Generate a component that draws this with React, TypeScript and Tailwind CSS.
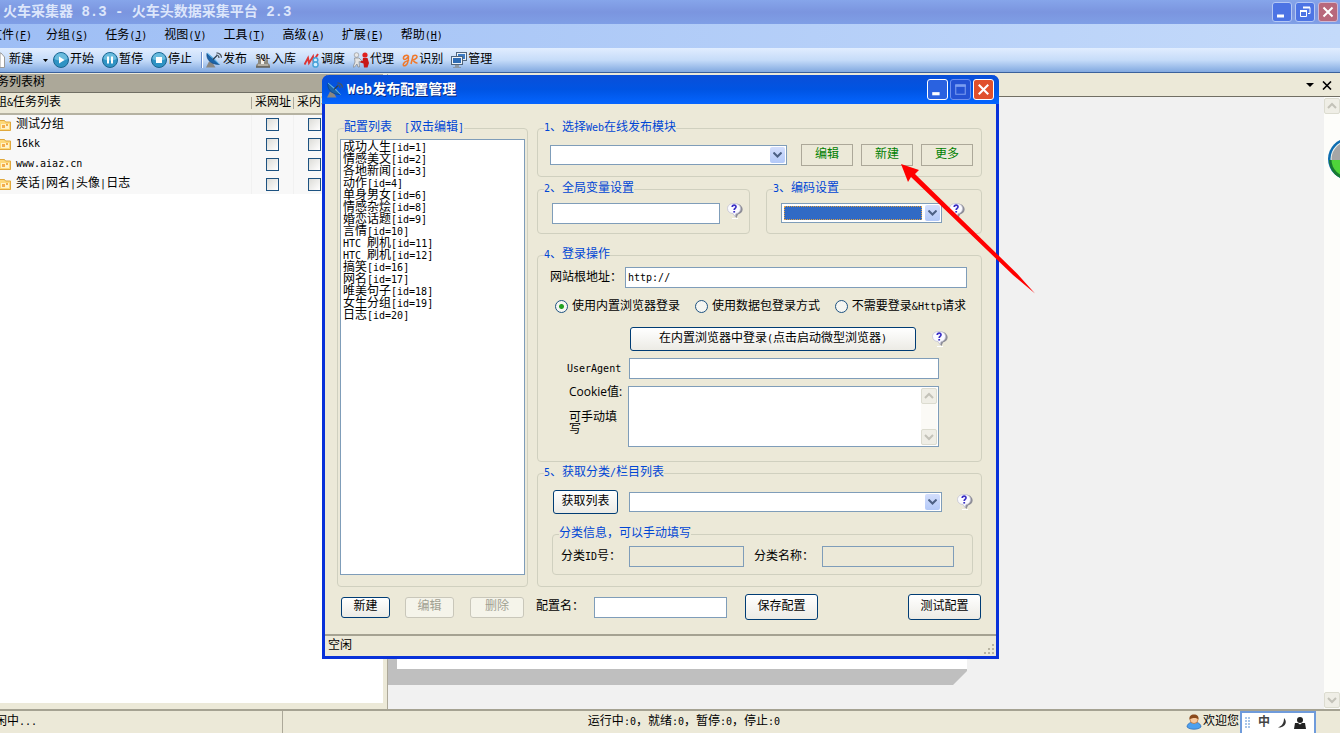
import { Fragment, type ReactNode } from "react";
import clsx from "clsx";

const MENU = [
  ["文件", "F"],
  ["分组", "S"],
  ["任务", "J"],
  ["视图", "V"],
  ["工具", "T"],
  ["高级", "A"],
  ["扩展", "E"],
  ["帮助", "H"],
];

const TREE = ["测试分组", "16kk", "www.aiaz.cn", "笑话|网名|头像|日志"];

const CONFIGS = [
  "成功人生[id=1]",
  "情感美文[id=2]",
  "各地新闻[id=3]",
  "动作[id=4]",
  "单身男女[id=6]",
  "情感杂烩[id=8]",
  "婚恋话题[id=9]",
  "言情[id=10]",
  "HTC 刷机[id=11]",
  "HTC 刷机[id=12]",
  "搞笑[id=16]",
  "网名[id=17]",
  "唯美句子[id=18]",
  "女生分组[id=19]",
  "日志[id=20]",
];

// Latin runs take half the width of a Chinese character
function Mixed({ children }: { children: string }) {
  return (
    <span className="whitespace-pre">
      {children.split(/([\x20-\x7e]+)/).map((part, i) =>
        i % 2 ? (
          <span key={i} className="font-['DejaVu_Sans_Mono',monospace] text-[10px]">
            {part}
          </span>
        ) : (
          <Fragment key={i}>{part}</Fragment>
        )
      )}
    </span>
  );
}

function DishIcon() {
  return (
    <svg className="h-4 w-4 shrink-0" viewBox="0 0 16 16">
      <path d="M0 15.500l3-6 4 2 2.500 4z" fill="#8a8782" />
      <path d="M1 1C0 6 3 12.500 13.500 12.500z" fill="#1b63a8" stroke="#0d3f78" strokeWidth=".6" />
      <path d="M1 1L13.500 12.500 8.500 7z" fill="#7cc4f0" stroke="#5db0e4" strokeWidth=".8" />
      <path d="M7 7.500l4-4" stroke="#2c3e50" strokeWidth="1.200" />
      <path d="M10 3a3 3 0 0 1 3 3M10.500.8a5 5 0 0 1 5 5" fill="none" stroke="#4b5560" strokeWidth="1.200" />
    </svg>
  );
}

function RoundIcon({ children }: { children: ReactNode }) {
  return (
    <svg className="h-4 w-4 shrink-0" viewBox="0 0 16 16">
      <circle cx="8" cy="8" r="7.500" fill="#2f93c4" stroke="#1c6590" />
      <path d="M1.500 7a6.500 6 0 0 1 13 0c-4 2-9 2-13 0z" fill="#69bbdd" />
      {children}
    </svg>
  );
}

function PlayIcon() {
  return (
    <RoundIcon>
      <path d="M6 4.500v7l5.500-3.500z" fill="#fff" />
    </RoundIcon>
  );
}

function PauseIcon() {
  return (
    <RoundIcon>
      <path d="M5 4.500h2v7H5zM9 4.500h2v7H9z" fill="#fff" />
    </RoundIcon>
  );
}

function StopIcon() {
  return (
    <RoundIcon>
      <path d="M5 5h6v6H5z" fill="#fff" />
    </RoundIcon>
  );
}

function SqlIcon() {
  return (
    <svg className="h-4 w-4 shrink-0" viewBox="0 0 16 16">
      <path d="M3 6h10v5l2 2v2.500H1V13l2-2z" fill="#8d8a80" />
      <path d="M6 7h3v5H6z" fill="#f2f0ea" />
      <path d="M3 12.500h10v1H3z" fill="#d8d5ca" />
      <path d="M1 14.500h14v1H1z" fill="#4c4a44" />
      <text x="8" y="7" textAnchor="middle" fontSize="8" fontWeight="bold" fill="#111" stroke="#e8f0fc" strokeWidth=".6" paintOrder="stroke">
        SQL
      </text>
    </svg>
  );
}

function ScheduleIcon() {
  return (
    <svg className="h-4 w-4 shrink-0" viewBox="0 0 16 16" fill="none">
      <path d="M.5 12.500L4 6l1 5 4-6.500.5 4.500L14 2" stroke="#dd3434" strokeWidth="1.900" />
      <circle cx="11.500" cy="8" r="2.300" fill="#d4efff" stroke="#4aa3da" strokeWidth="1.500" />
      <circle cx="11.500" cy="12.500" r="2.600" fill="#d4efff" stroke="#4aa3da" strokeWidth="1.500" />
    </svg>
  );
}

function ProxyIcon() {
  return (
    <svg className="h-4 w-4 shrink-0" viewBox="0 0 16 16">
      <circle cx="3.500" cy="3" r="2.300" fill="#e8e8e8" stroke="#8b8b8b" strokeWidth=".6" />
      <path d="M1.500 6h4.500l3 3-1 1.500-2-1 .5 5.500H5l-1-3-2.500 3H0l2-5z" fill="#e4e4e4" stroke="#777" strokeWidth=".6" />
      <circle cx="12" cy="3" r="2.600" fill="#e02020" />
      <path d="M10 6h4.500l1.500 5-1.500 4.500H11l-.5-4L7.500 10.500V9h2z" fill="#c81818" />
    </svg>
  );
}

function ScriptIcon() {
  return (
    <svg className="h-4 w-4 shrink-0" viewBox="0 0 16 16" fill="none" stroke="#f0782a" strokeWidth="1.500">
      <path d="M6.500 4C4 2 1 4.500 1.500 6.500S5.500 7 6.500 4c0 5-1 8.500-3 9.500S.5 13 2 11s4-2 5-3" />
      <path d="M9 12l2-8c3-1.500 5 0 3.500 2S10 8 10 8c2 0 2 3.500 5.500 3" />
    </svg>
  );
}

function ScreensIcon() {
  return (
    <svg className="h-4 w-4 shrink-0" viewBox="0 0 16 16">
      <path d="M5 0h11v9H5z" fill="#51657c" />
      <path d="M6 1h9v7H6z" fill="#eef3f8" />
      <path d="M7 2h7v5H7z" fill="#3e7cc4" />
      <path d="M0 4h12v9H0z" fill="#51657c" />
      <path d="M1 5h10v7H1z" fill="#eef3f8" />
      <path d="M2 6h8v5H2z" fill="#2f6cb5" />
      <path d="M4 13h4v2H4zM2 15h8v1H2z" fill="#8b97a5" />
    </svg>
  );
}

function FolderIcon() {
  return (
    <svg className="h-3 w-3 shrink-0" viewBox="0 0 12 12">
      <path d="M.5 1.500h5l1 1.500h5v8.500H.5z" fill="#fdd878" stroke="#e0a83c" />
      <path d="M2 5h8v5H2z" fill="#fff2c8" />
      <path d="M3 6h3v3H3zM7 5h2v2H7z" fill="#f2ac4c" />
    </svg>
  );
}

function HelpIcon() {
  return (
    <svg className="h-4 w-4 shrink-0" viewBox="0 0 16 16">
      <path d="M4 2a7 5.500 0 0 1 11 2c2 4-1 6.500-4 7.500L9.500 15 7 12z" fill="#8e8e98" />
      <path d="M7 .5c4 0 6.500 2 6.500 5s-2.500 5-4.500 5l-1 3-2-3C3 10.500.5 8.500.5 5.500S3 .5 7 .5z" fill="#fbfbff" stroke="#c2c2d2" strokeWidth=".8" />
      <path d="M5.200 4c.2-2.500 4-2.300 3.800 0C8.800 5.500 7.200 5.500 7.200 7" fill="none" stroke="#3a2fc4" strokeWidth="1.700" />
      <path d="M6.300 8h1.800v1.600H6.300z" fill="#3a2fc4" />
      <path d="M5 15.500h6" stroke="#fff" />
    </svg>
  );
}

function UserIcon() {
  return (
    <svg className="h-4 w-4 shrink-0" viewBox="0 0 16 16">
      <path d="M1 13c0-3 3-5 7-5s7 2 7 5c-3 3-11 3-14 0z" fill="#4da0ee" stroke="#2a68b4" strokeWidth=".7" />
      <circle cx="8" cy="5.500" r="4" fill="#f8c89c" stroke="#b4692c" strokeWidth=".7" />
      <path d="M3.500 5.500C3 2 5 .5 8 .5S13 2 12.500 5.500C11 3.500 6 3.500 3.500 5.500z" fill="#8b4a1c" />
    </svg>
  );
}

const TOOLS = [
  { label: "开始", Icon: PlayIcon },
  { label: "暂停", Icon: PauseIcon },
  { label: "停止", Icon: StopIcon },
];

const MODULES = [
  { label: "发布", Icon: DishIcon },
  { label: "入库", Icon: SqlIcon },
  { label: "调度", Icon: ScheduleIcon },
  { label: "代理", Icon: ProxyIcon },
  { label: "识别", Icon: ScriptIcon },
  { label: "管理", Icon: ScreensIcon },
];

function ToolButton({ label, Icon }: { label: string; Icon: () => ReactNode }) {
  return (
    <button className="flex items-center gap-px">
      <Icon />
      {label}
    </button>
  );
}

type Caption = "min" | "restore" | "max" | "close";

function CaptionButton({ kind, className }: { kind: Caption; className: string }) {
  return (
    <button aria-label={kind} className={clsx("rounded-[3px] border", className)}>
      <svg className="h-full w-full" viewBox="0 0 18 18" fill="none" stroke="#fff">
        {kind === "min" && <path d="M4 13h7" strokeWidth="3" />}
        {kind === "restore" && (
          <>
            <path d="M4.500 8h6v5.500h-6zM7 4.500h7v6h-2" />
            <path d="M4 8h7M7 4.500h7" strokeWidth="2" />
          </>
        )}
        {kind === "max" && (
          <>
            <path d="M4.500 4.500h9v9h-9z" stroke="#7b9df0" />
            <path d="M4 5.500h10" stroke="#7b9df0" strokeWidth="2" />
          </>
        )}
        {kind === "close" && <path d="M4.500 4.500l9 9M13.500 4.500l-9 9" strokeWidth="2" />}
      </svg>
    </button>
  );
}

function ScrollButton({ down }: { down?: boolean }) {
  return (
    <button
      aria-label={down ? "向下" : "向上"}
      className="flex h-4 w-full items-center justify-center rounded-[2px] border border-[#dcdcd0] bg-[#efeee6]"
    >
      <svg className="h-2 w-[10px]" viewBox="0 0 10 8" fill="none" stroke="#c3c2b8" strokeWidth="2">
        <path d={down ? "M1 2l4 4 4-4" : "M1 6l4-4 4 4"} />
      </svg>
    </button>
  );
}

function Group({ title, className, children }: { title: string; className?: string; children: ReactNode }) {
  return (
    <fieldset className={clsx("min-w-0 rounded-[4px] border border-[#d0d0bf] px-[6px]", className)}>
      <legend className="h-3 text-[#0046d5]">
        <Mixed>{title}</Mixed>
      </legend>
      {children}
    </fieldset>
  );
}

function Combo({ label, focused, className }: { label: string; focused?: boolean; className: string }) {
  return (
    <div className={clsx("flex h-5 items-stretch border border-[#7f9db9] bg-white p-px", className)}>
      <select
        aria-label={label}
        className={clsx(
          "mr-[3px] min-w-0 flex-1 appearance-none outline-none",
          focused && "m-px border border-dotted border-[#e0a040] bg-[#316ac5]"
        )}
      />
      <span className="flex w-[15px] items-center justify-center rounded-[2px] bg-linear-to-b from-[#d3defc] to-[#b3c9f8]">
        <svg className="h-[6px] w-[9px]" viewBox="0 0 9 6" fill="none" stroke="#4d6185" strokeWidth="2">
          <path d="M.5 .5l4 4 4-4" />
        </svg>
      </span>
    </div>
  );
}

function PushButton({ children, disabled, className }: { children: string; disabled?: boolean; className: string }) {
  return (
    <button
      disabled={disabled}
      className={clsx(
        "rounded-[3px] border",
        disabled
          ? "border-[#c9c7ba] bg-[#f5f4ea] text-[#a1a192]"
          : "border-[#003c74] bg-linear-to-b from-white to-[#ecebe5]",
        className
      )}
    >
      <Mixed>{children}</Mixed>
    </button>
  );
}

function Radio({ children, checked }: { children: string; checked?: boolean }) {
  return (
    <label className="flex items-center gap-1">
      <input
        type="radio"
        name="login"
        defaultChecked={checked}
        className="h-[13px] w-[13px] appearance-none rounded-full border border-[#1d5281] bg-[#f6f6f2] checked:bg-[radial-gradient(circle,#21a121_2px,#f6f6f2_3px)]"
      />
      <Mixed>{children}</Mixed>
    </label>
  );
}

const FIELD =
  "h-[21px] border border-[#7f9db9] bg-white px-[2px] font-['DejaVu_Sans_Mono',monospace] text-[10px] outline-none disabled:bg-[#ece9d8]";

function TreePanel() {
  return (
    <section className="flex w-[388px] shrink-0 flex-col border-r border-[#aca899] bg-[#ece9d8] pr-1 pb-[6px]">
      <h2 className="-indent-[3px] h-[19px] border-b border-[#716f64] bg-[#aca899] leading-[18px]">务列表树</h2>
      <div className="flex-1 bg-white">
        <table className="w-full table-fixed border-collapse">
          <colgroup>
            <col />
            <col className="w-[42px]" />
            <col className="w-[90px]" />
          </colgroup>
          <thead>
            <tr className="h-[21px] border-b-2 border-[#b5b2a2] bg-[#ece9d8] text-left">
              <th className="-indent-[5px] font-normal">
                <Mixed>组&任务列表</Mixed>
              </th>
              <th className="font-normal">
                <span className="block border-l border-[#aca899] pl-[3px]">采网址</span>
              </th>
              <th className="font-normal">
                <span className="block border-l border-[#aca899] pl-[3px]">采内容</span>
              </th>
            </tr>
          </thead>
          <tbody>
            {TREE.map((name) => (
              <tr key={name} className="h-5 bg-[#f8f8f8]">
                <td>
                  <span className="-ml-px flex items-center gap-[5px]">
                    <FolderIcon />
                    <Mixed>{name}</Mixed>
                  </span>
                </td>
                {["采网址", "采内容"].map((col) => (
                  <td key={col} className="border-l border-[#f1f1f1] pl-[14px]">
                    <input
                      type="checkbox"
                      aria-label={`${name} ${col}`}
                      className="block h-[13px] w-[13px] appearance-none border border-[#1d5281] bg-linear-to-br from-[#dcdcd7] to-white"
                    />
                  </td>
                ))}
              </tr>
            ))}
          </tbody>
        </table>
      </div>
    </section>
  );
}

function Workspace() {
  return (
    <section className="flex min-w-0 flex-1 flex-col">
      <div className="flex h-[23px] items-center justify-end gap-2 border-b border-[#716f64] bg-[#ece9d8] pr-2">
        <button aria-label="列表">
          <svg className="h-1 w-2" viewBox="0 0 8 4">
            <path d="M0 0h8L4 4z" />
          </svg>
        </button>
        <button aria-label="关闭">
          <svg className="h-[9px] w-[10px]" viewBox="0 0 10 9" fill="none" stroke="#000" strokeWidth="1.600">
            <path d="M1 .5l8 8M9 .5l-8 8" />
          </svg>
        </button>
      </div>
      <div className="flex flex-1">
        <div className="flex flex-1 flex-col justify-end bg-[#f1f1f1] pb-6">
          <svg className="h-10 w-[580px]" viewBox="0 0 580 40">
            <path d="M0 0h9v24h570v2L565 40H0z" fill="#bfbfbf" />
            <path d="M9 0h570v24H9z" fill="#fff" />
          </svg>
        </div>
        <div className="flex w-4 flex-col justify-between bg-[#fdfdfa] py-px">
          <ScrollButton />
          <ScrollButton down />
        </div>
      </div>
    </section>
  );
}

function PublishDialog() {
  return (
    <div
      role="dialog"
      aria-label="Web发布配置管理"
      className="absolute top-[75px] left-[322px] w-[677px] rounded-t-[7px] border-x-3 border-b-3 border-[#0831d9] bg-[#ece9d8]"
    >
      <div className="-mx-[3px] flex h-[29px] items-center rounded-t-[7px] bg-linear-to-b from-[#0a4fd8] via-[#0054e3] to-[#0565ff] px-[5px]">
        <DishIcon />
        <h1 className="ml-1 flex-1 text-sm font-bold text-white [text-shadow:1px_1px_#0a2a80]">Web发布配置管理</h1>
        <div className="flex gap-[2px]">
          <CaptionButton kind="min" className="h-[21px] w-[21px] border-white bg-[#2a62e0]" />
          <CaptionButton kind="max" className="h-[21px] w-[21px] border-[#6c8ff0] bg-[#2452d4]" />
          <CaptionButton kind="close" className="h-[21px] w-[21px] border-white bg-[#e0502c]" />
        </div>
      </div>

      <div className="pt-[18px] pr-[14px] pb-[14px] pl-3">
        <div className="flex gap-[9px]">
          <Group title="配置列表  [双击编辑]" className="w-[191px]">
            <ul
              role="listbox"
              className="-mx-1 mt-[5px] h-[436px] border border-[#7f9db9] bg-white px-[2px] pt-[2px]"
            >
              {CONFIGS.map((name) => (
                <li key={name} role="option" aria-selected={false} className="h-3">
                  <Mixed>{name}</Mixed>
                </li>
              ))}
            </ul>
          </Group>

          <div className="flex-1">
            <Group title="1、选择Web在线发布模块" className="h-[55px]">
              <div className="flex items-center gap-2 pt-[10px] pl-[6px]">
                <Combo label="发布模块" className="mr-[6px] w-[237px]" />
                {["编辑", "新建", "更多"].map((label) => (
                  <button key={label} className="h-[22px] w-[52px] border border-[#aca899] text-[#008000]">
                    {label}
                  </button>
                ))}
              </div>
            </Group>

            <div className="mt-[6px] flex gap-4">
              <Group title="2、全局变量设置" className="h-[51px] w-[213px]">
                <div className="flex gap-[7px] pt-2 pl-2">
                  <input aria-label="全局变量" className={clsx(FIELD, "w-[170px]")} />
                  <HelpIcon />
                </div>
              </Group>
              <Group title="3、编码设置" className="h-[51px] flex-1">
                <div className="flex gap-[7px] pt-2 pl-2">
                  <Combo label="编码" focused className="w-[161px]" />
                  <HelpIcon />
                </div>
              </Group>
            </div>

            <Group title="4、登录操作" className="mt-[15px] h-[213px]">
              <label className="flex items-center gap-[3px] pt-[6px] pl-[6px]">
                网站根地址：
                <input defaultValue="http://" className={clsx(FIELD, "w-[342px]")} />
              </label>
              <div className="mt-3 flex justify-between pr-[9px] pl-[11px]">
                <Radio checked>使用内置浏览器登录</Radio>
                <Radio>使用数据包登录方式</Radio>
                <Radio>不需要登录&Http请求</Radio>
              </div>
              <div className="mt-[14px] flex items-center gap-4 pl-[86px]">
                <PushButton className="h-6 w-[286px]">在内置浏览器中登录(点击启动微型浏览器)</PushButton>
                <HelpIcon />
              </div>
              <label className="mt-[7px] flex items-center gap-2 pl-[23px]">
                <Mixed>UserAgent</Mixed>
                <input className={clsx(FIELD, "w-[310px]")} />
              </label>
              <div className="mt-[7px] flex pl-[25px]">
                <label htmlFor="cookie" className="w-[59px] pr-[10px]">
                  <span className="block whitespace-nowrap font-['Open_Sans','Noto_Sans_CJK_SC',sans-serif]">
                    Cookie值:
                  </span>
                  <span className="mt-[14px] block">可手动填写</span>
                </label>
                <div className="flex h-[61px] w-[311px] border border-[#7f9db9] bg-white p-px">
                  <textarea id="cookie" className="flex-1 resize-none outline-none" />
                  <div className="flex w-4 flex-col justify-between bg-[#fbfaf6]">
                    <ScrollButton />
                    <ScrollButton down />
                  </div>
                </div>
              </div>
            </Group>

            <Group title="5、获取分类/栏目列表" className="mt-[5px] h-[120px]">
              <div className="flex items-center pt-[11px] pl-[9px]">
                <PushButton className="h-6 w-[65px]">获取列表</PushButton>
                <Combo label="分类列表" className="mr-[15px] ml-[11px] w-[313px]" />
                <HelpIcon />
              </div>
              <Group title="分类信息，可以手动填写" className="mt-[14px] mr-[2px] ml-2 h-[47px]">
                <div className="flex items-center gap-[10px] pt-[6px] pl-[2px]">
                  <label className="flex items-center gap-2">
                    <Mixed>分类ID号：</Mixed>
                    <input disabled className={clsx(FIELD, "w-[115px]")} />
                  </label>
                  <label className="flex items-center gap-2">
                    分类名称：
                    <input disabled className={clsx(FIELD, "w-[132px]")} />
                  </label>
                </div>
              </Group>
            </Group>
          </div>
        </div>

        <div className="mt-[7px] flex items-center pr-px pl-1">
          <PushButton className="h-[21px] w-[49px]">新建</PushButton>
          <PushButton disabled className="ml-[15px] h-[21px] w-[49px]">
            编辑
          </PushButton>
          <PushButton disabled className="ml-4 h-[21px] w-[54px]">
            删除
          </PushButton>
          <label className="ml-3 flex items-center gap-[10px]">
            配置名：
            <input className={clsx(FIELD, "w-[133px]")} />
          </label>
          <PushButton className="ml-[18px] h-[26px] w-[73px]">保存配置</PushButton>
          <PushButton className="ml-auto h-[26px] w-[73px]">测试配置</PushButton>
        </div>
      </div>

      <div className="flex h-[22px] items-center justify-between border-t-2 border-[#a5a292] pl-[3px]">
        空闲
        <svg className="h-3 w-3 self-end" viewBox="0 0 12 12" fill="#b8b4a2">
          <path d="M8 0h2v2H8zM4 4h2v2H4zM8 4h2v2H8zM0 8h2v2H0zM4 8h2v2H4zM8 8h2v2H8z" />
        </svg>
      </div>
    </div>
  );
}

export default function App() {
  return (
    <div className="relative flex h-screen flex-col overflow-hidden bg-[#ece9d8] font-['Liberation_Mono','Noto_Sans_CJK_SC',monospace] text-xs leading-3 text-black">
      <header className="flex h-6 shrink-0 items-center justify-between bg-linear-to-b from-[#86a5ea] via-[#7b95df] to-[#7f9fe6] pr-[2px] pl-[3px]">
        <span className="text-sm font-bold text-[#dce6fb]">火车采集器 8.3 - 火车头数据采集平台 2.3</span>
        <div className="flex gap-[3px]">
          <CaptionButton kind="min" className="h-5 w-5 border-[#b4c8f4] bg-[#4d74e4]" />
          <CaptionButton kind="restore" className="h-5 w-5 border-[#b4c8f4] bg-[#4d74e4]" />
          <CaptionButton kind="close" className="h-5 w-5 border-[#cdb8d4] bg-[#b8687c]" />
        </div>
      </header>

      <nav className="flex h-6 shrink-0 items-center gap-[17px] bg-linear-to-r from-[#9ebef5] to-[#c4dafa]">
        {MENU.map(([name, key]) => (
          <button key={name} className="shrink-0 first:-mr-[3px] first:-ml-[10px]">
            {name}
            <span className="font-['DejaVu_Sans_Mono',monospace] text-[10px]">
              (<u>{key}</u>)
            </span>
          </button>
        ))}
      </nav>

      <div className="flex h-[25px] shrink-0 items-center gap-2 border-b border-[#3b619c] bg-linear-to-b from-[#e1edff] via-[#c6dcf9] to-[#82a9e0]">
        <button className="-mr-[3px] flex items-center">
          <svg className="mr-1 h-4 w-[5px]" viewBox="0 0 5 16">
            <path d="M0 1h1l3.500 4v10.500H0z" fill="#fff" stroke="#9a9a9a" />
          </svg>
          新建
          <svg className="ml-[10px] h-[3px] w-[5px]" viewBox="0 0 5 3">
            <path d="M0 0h5L2.500 3z" />
          </svg>
        </button>
        {TOOLS.map((tool) => (
          <ToolButton key={tool.label} {...tool} />
        ))}
        <span className="mr-[-5px] ml-[1px] h-4 w-[2px] border-l border-[#6a8ccb] bg-white" />
        {MODULES.map((tool) => (
          <ToolButton key={tool.label} {...tool} />
        ))}
      </div>

      <main className="flex min-h-0 flex-1 pt-px">
        <TreePanel />
        <Workspace />
      </main>

      <footer className="flex h-6 shrink-0 items-stretch border-t-2 border-[#a5a292]">
        <div className="flex w-[283px] items-center border-r border-[#aca899] -indent-[5px]">
          <Mixed>闲中...</Mixed>
        </div>
        <div className="flex flex-1 items-center justify-center pr-[101px]">
          <Mixed>运行中:0，就绪:0，暂停:0，停止:0</Mixed>
        </div>
        <div className="flex items-center pr-6">
          <UserIcon />
          <span className="ml-px">欢迎您</span>
          <div className="ml-px flex h-full w-[76px] items-center justify-between border-2 border-b-0 border-[#6f9bdb] bg-white pr-2 pl-[3px]">
            <svg className="h-3 w-[5px]" viewBox="0 0 5 12" fill="#a9c6e8">
              <path d="M0 0h2v2H0zM3 0h2v2H3zM0 3h2v2H0zM3 3h2v2H3zM0 6h2v2H0zM3 6h2v2H3zM0 9h2v2H0zM3 9h2v2H3z" />
            </svg>
            <span className="font-bold text-[#444]">中</span>
            <svg className="h-[10px] w-2" viewBox="0 0 8 10">
              <path d="M6 0c4 4 1 10-6 9.500C4 8 6 5 6 0z" fill="#333" />
            </svg>
            <svg className="h-3 w-3" viewBox="0 0 12 12" fill="#222">
              <circle cx="6" cy="3" r="3" />
              <path d="M1 6h3l2 1.500L8 6h3l1 6H0z" />
            </svg>
          </div>
        </div>
      </footer>

      <svg className="absolute top-[137px] -right-[31px] h-11 w-11" viewBox="0 0 44 44">
        <circle cx="22" cy="22" r="21" fill="#0e6db0" />
        <circle cx="22" cy="22" r="18.500" fill="#f2f6f2" />
        <circle cx="22" cy="22" r="17.500" fill="#a6a6a6" />
        <path d="M2 23h40a20 20 0 0 1-40 0z" fill="#187a30" />
        <path d="M4.500 23h36a18 17 0 0 1-36 0z" fill="#4fd43a" />
      </svg>

      <PublishDialog />

      <svg className="pointer-events-none absolute top-[163px] left-[900px] h-[132px] w-[136px]" viewBox="0 0 136 132">
        <path d="M1 1l18 6-4 4L117 110.500 135 130.500 113 112 11 14l-3 5z" fill="#f00" />
      </svg>
    </div>
  );
}
